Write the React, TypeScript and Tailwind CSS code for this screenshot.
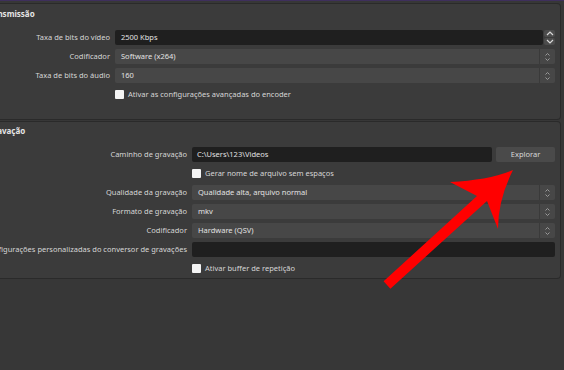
import React from "react";

const font = { fontFamily: '"Noto Sans", "Open Sans", sans-serif' };

function ComboArrows() {
  return (
    <svg width="7" height="10" viewBox="0 0 7 10" fill="none" stroke="#9a9a9a" strokeWidth="1">
      <path d="M1.5 3.5 L3.5 1.5 L5.5 3.5" />
      <path d="M1.5 6.5 L3.5 8.5 L5.5 6.5" />
    </svg>
  );
}

function Combo({ value }: { value: string }) {
  return (
    <div className="flex h-[15px] flex-1 items-center rounded-[2px] bg-[#474747]">
      <span className="flex-1 pl-[6px] text-[#e2e2e2]">{value}</span>
      <div className="flex h-full w-[16px] items-center justify-center border-l border-[#3a3a3a]">
        <ComboArrows />
      </div>
    </div>
  );
}

function TextInput({ value }: { value?: string }) {
  return (
    <div className="flex h-[15px] flex-1 items-center rounded-[2px] bg-[#1f1f1f] pl-[5px] text-[#e2e2e2]">
      {value}
    </div>
  );
}

function SpinBox({ value }: { value: string }) {
  return (
    <div className="flex h-[15px] flex-1 items-stretch gap-[1px]">
      <div className="flex flex-1 items-center rounded-[2px] bg-[#1f1f1f] pl-[6px] text-[#e2e2e2]">
        {value}
      </div>
      <div className="flex w-[11px] flex-col gap-[1px]">
        <div className="flex flex-1 items-center justify-center rounded-[2px] bg-[#4c4c4c]">
          <svg width="8" height="5" viewBox="0 0 8 5" fill="none" stroke="#d8d8d8" strokeWidth="1.2">
            <path d="M1 4 L4 1 L7 4" />
          </svg>
        </div>
        <div className="flex flex-1 items-center justify-center rounded-[2px] bg-[#4c4c4c]">
          <svg width="8" height="5" viewBox="0 0 8 5" fill="none" stroke="#d8d8d8" strokeWidth="1.2">
            <path d="M1 1 L4 4 L7 1" />
          </svg>
        </div>
      </div>
    </div>
  );
}

function Row({ label, width, children }: { label: string; width: string; children: React.ReactNode }) {
  return (
    <div className="flex h-[15px] items-center gap-[5px]">
      <div className={`flex ${width} shrink-0 justify-end whitespace-nowrap text-[#d6d6d6]`}>{label}</div>
      {children}
    </div>
  );
}

function Check({ label, width }: { label: string; width: string }) {
  return (
    <div className="flex h-[15px] items-center gap-[5px]">
      <div className={`${width} shrink-0`} />
      <div className="h-[9px] w-[9px] rounded-[1px] bg-[#f4f4f4]" />
      <span className="ml-[-1px] whitespace-nowrap text-[#d6d6d6]">{label}</span>
    </div>
  );
}

export default function App() {
  return (
    <div className="relative h-[370px] w-[564px] overflow-hidden bg-[#373737] text-[7.5px] leading-none" style={font}>
      <div className="h-[1px] bg-[#3e2f5c]" />
      <div className="mt-[2px] mr-[3px] rounded-r-[4px] border border-l-0 border-[#2a2a2a] bg-[#3b3b3b] pb-[17px] pr-[5px]">
        <div className="ml-[-15px] mt-[4px] h-[12px] whitespace-nowrap text-[8px] font-bold leading-[12px] text-[#e6e6e6]">
          Transmissão
        </div>
        <div className="mt-[10px] flex flex-col gap-[4px]">
          <Row label="Taxa de bits do vídeo" width="w-[110px]">
            <SpinBox value="2500 Kbps" />
          </Row>
          <Row label="Codificador" width="w-[110px]">
            <Combo value="Software (x264)" />
          </Row>
          <Row label="Taxa de bits do áudio" width="w-[110px]">
            <Combo value="160" />
          </Row>
          <Check label="Ativar as configurações avançadas do encoder" width="w-[110px]" />
        </div>
      </div>

      <div className="mt-[1px] mr-[3px] rounded-r-[4px] border border-l-0 border-[#2a2a2a] bg-[#3b3b3b] pb-[2px] pr-[5px]">
        <div className="ml-[-12px] mt-[3px] h-[12px] whitespace-nowrap text-[8px] font-bold leading-[12px] text-[#e6e6e6]">
          Gravação
        </div>
        <div className="mt-[10px] flex flex-col gap-[4px]">
          <Row label="Caminho de gravação" width="w-[187px]">
            <TextInput value="C:\Users\123\Videos" />
            <button className="ml-[-1px] flex h-[15px] w-[59px] items-center justify-center rounded-[2px] bg-[#4a4a4a] text-[#d8d8d8]">
              Explorar
            </button>
          </Row>
          <Check label="Gerar nome de arquivo sem espaços" width="w-[187px]" />
          <Row label="Qualidade da gravação" width="w-[187px]">
            <Combo value="Qualidade alta, arquivo normal" />
          </Row>
          <Row label="Formato de gravação" width="w-[187px]">
            <Combo value="mkv" />
          </Row>
          <Row label="Codificador" width="w-[187px]">
            <Combo value="Hardware (QSV)" />
          </Row>
          <Row label="Configurações personalizadas do conversor de gravações" width="w-[187px]">
            <TextInput />
          </Row>
          <Check label="Ativar buffer de repetição" width="w-[187px]" />
        </div>
      </div>

      <svg className="pointer-events-none absolute left-0 top-0" width="564" height="370" viewBox="0 0 564 370">
        <path
          d="M383.6 281.3 L477 196 L450 182 Q490 180 513 170 Q498 200 498 229 L487 201 L390.4 288.7 Z"
          fill="#ff0000"
        />
      </svg>
    </div>
  );
}
